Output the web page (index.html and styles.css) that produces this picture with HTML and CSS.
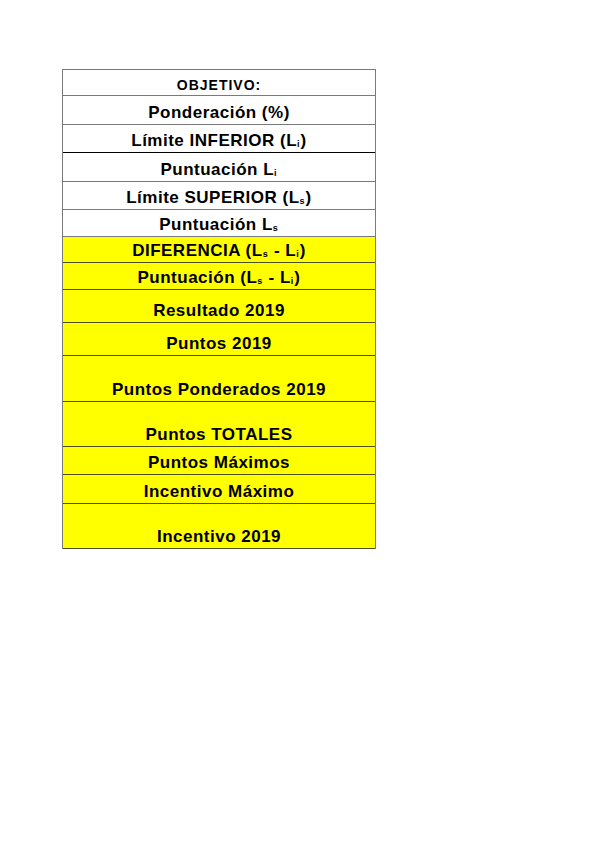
FILE: index.html
```html
<!DOCTYPE html>
<html lang="es">
<head>
<meta charset="utf-8">
<title>Objetivo</title>
<link rel="stylesheet" href="styles.css">
</head>
<body>
<div class="sheet">
  <div class="row h26 small"><span class="txt">OBJETIVO:</span></div>
  <div class="row h29"><span class="txt">Ponderación (%)</span></div>
  <div class="row h28 dark"><span class="txt">Límite INFERIOR (L<sub>i</sub>)</span></div>
  <div class="row h29"><span class="txt">Puntuación L<sub>i</sub></span></div>
  <div class="row h28"><span class="txt">Límite SUPERIOR (L<sub>s</sub>)</span></div>
  <div class="row h27"><span class="txt">Puntuación L<sub>s</sub></span></div>
  <div class="row h26 yellow"><span class="txt">DIFERENCIA (L<sub>s</sub> - L<sub>i</sub>)</span></div>
  <div class="row h27 yellow"><span class="txt">Puntuación (L<sub>s</sub> - L<sub>i</sub>)</span></div>
  <div class="row h33 yellow"><span class="txt">Resultado 2019</span></div>
  <div class="row h33 yellow"><span class="txt">Puntos 2019</span></div>
  <div class="row h46 yellow"><span class="txt">Puntos Ponderados 2019</span></div>
  <div class="row h45 yellow"><span class="txt">Puntos TOTALES</span></div>
  <div class="row h28 yellow"><span class="txt">Puntos Máximos</span></div>
  <div class="row h29 yellow"><span class="txt">Incentivo Máximo</span></div>
  <div class="row h45 yellow"><span class="txt">Incentivo 2019</span></div>
</div>
</body>
</html>
```

FILE: styles.css
```css
html, body {
  margin: 0;
  padding: 0;
  background: #ffffff;
}

body {
  font-family: "Liberation Sans", Arial, sans-serif;
  color: #000000;
}

.sheet {
  margin: 69px 0 0 62px;
  width: 314px;
  box-sizing: border-box;
  border: 1px solid #7a7a7a;
  border-bottom: none;
  display: flex;
  flex-direction: column;
}

.row {
  box-sizing: border-box;
  border-bottom: 1px solid #7a7a7a;
  display: flex;
  align-items: flex-end;
  justify-content: center;
  padding-bottom: 3px;
  font-weight: bold;
  font-size: 17px;
  line-height: 17px;
  letter-spacing: 0.5px;
  white-space: nowrap;
}

.txt {
  display: block;
}

.row.dark {
  border-bottom-color: #000000;
}

.row.small {
  font-size: 14px;
  line-height: 14px;
  letter-spacing: 1px;
  padding-bottom: 3px;
}

.row.yellow {
  background: #ffff00;
  border-bottom-color: #4f4f1c;
}

.row sub {
  font-size: 9px;
  line-height: 0;
  vertical-align: -1px;
  letter-spacing: 0;
  padding: 0 1px 0 0;
}

.h26 { height: 26px; }
.h27 { height: 27px; }
.h28 { height: 28px; }
.h29 { height: 29px; }
.h33 { height: 33px; }
.h45 { height: 45px; }
.h46 { height: 46px; }
```
